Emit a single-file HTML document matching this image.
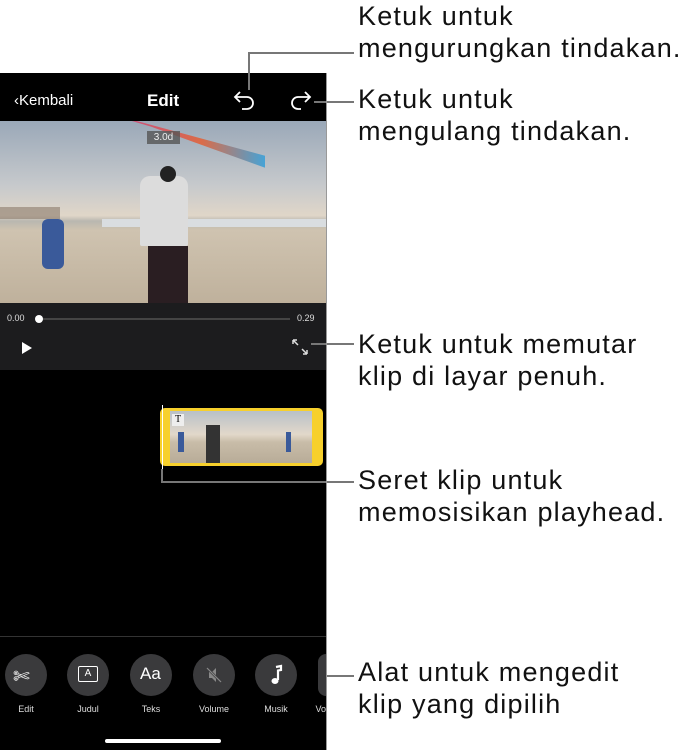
<!DOCTYPE html>
<html><head><meta charset="utf-8"><style>
body{margin:0;width:689px;height:750px;background:#fff;position:relative;overflow:hidden;font-family:"Liberation Sans",sans-serif}
.ab{position:absolute}
.t{position:absolute;left:358px;font-size:27px;letter-spacing:1.2px;line-height:32px;color:#111;white-space:nowrap}
.ln{position:absolute;background:#777}
.circ{position:absolute;width:42px;height:42px;border-radius:50%;background:#3a3a3c;top:654px}
.lab{position:absolute;top:704px;font-size:9px;color:#ddd;width:60px;text-align:center}
</style></head><body>
<div class="ab" style="left:0;top:73px;width:326px;height:677px;background:#000"></div>
<div class="ab" style="left:14px;top:92px;color:#fff;font-size:15px">&#8249;Kembali</div>
<div class="ab" style="left:147px;top:91px;color:#fff;font-size:17px;font-weight:bold">Edit</div>
<svg class="ab" style="left:232px;top:88px" width="28" height="26" viewBox="0 0 28 26"><path d="M8 4 L3 9 L8 14 M3 9 H15 A6 6 0 0 1 15 21 H10" fill="none" stroke="#fff" stroke-width="1.8"/></svg>
<svg class="ab" style="left:285px;top:88px" width="28" height="26" viewBox="0 0 28 26"><path d="M20 4 L25 9 L20 14 M25 9 H13 A6 6 0 0 0 13 21 H16" fill="none" stroke="#fff" stroke-width="1.8"/></svg>
<!-- video -->
<div class="ab" style="left:0;top:121px;width:326px;height:182px;background:linear-gradient(180deg,#9aa8b8 0%,#c6c9cc 35%,#e0d6c8 52%,#b9b7b0 55%,#cfc3b0 60%,#bfb19c 100%);overflow:hidden">
<div class="ab" style="left:75px;top:0;width:190px;height:30px;background:linear-gradient(90deg,#4a8fd0,#d44a6c,#e0643c,#3aa0d8);transform:skewY(10deg);opacity:.9;clip-path:polygon(0 0,100% 60%,100% 100%,40% 30%)"></div>
<div class="ab" style="left:102px;top:98px;width:224px;height:8px;background:#d9dde0"></div>
<div class="ab" style="left:140px;top:55px;width:48px;height:70px;background:#dcdcdc;border-radius:10px 10px 2px 2px"></div>
<div class="ab" style="left:160px;top:45px;width:16px;height:16px;background:#222;border-radius:50%"></div>
<div class="ab" style="left:148px;top:125px;width:40px;height:57px;background:#2a1e22"></div>
<div class="ab" style="left:42px;top:98px;width:22px;height:50px;background:#3a5a9a;border-radius:6px"></div>
<div class="ab" style="left:0;top:86px;width:60px;height:12px;background:#8a7a6a;opacity:.6"></div>
<div class="ab" style="left:147px;top:10px;width:33px;height:13px;background:#555c;color:#eee;font-size:10px;text-align:center;line-height:13px">3.0d</div>
</div>
<div class="ab" style="left:0;top:303px;width:326px;height:67px;background:#1c1c1e"></div>
<div class="ab" style="left:7px;top:313px;color:#ddd;font-size:9px">0.00</div>
<div class="ab" style="left:297px;top:313px;color:#ddd;font-size:9px">0.29</div>
<div class="ab" style="left:40px;top:318px;width:250px;height:2px;background:#444"></div>
<div class="ab" style="left:35px;top:315px;width:8px;height:8px;border-radius:50%;background:#fff"></div>
<svg class="ab" style="left:21px;top:341px" width="12" height="14"><path d="M1 1 L11 7 L1 13Z" fill="#fff"/></svg>
<svg class="ab" style="left:291px;top:338px" width="18" height="18" viewBox="0 0 18 18"><path d="M2 2 L7 7 M2 2 V6 M2 2 H6 M16 16 L11 11 M16 16 V12 M16 16 H12" stroke="#ddd" stroke-width="1.5" fill="none"/></svg>
<!-- clip -->
<div class="ab" style="left:160px;top:408px;width:163px;height:58px;background:#f7d02c;border-radius:5px"></div>
<div class="ab" style="left:170px;top:411px;width:142px;height:52px;background:linear-gradient(180deg,#b8c0c8 0%,#e2d8ca 45%,#c8bca8 60%,#b8ac98 100%)"></div>
<div class="ab" style="left:206px;top:425px;width:14px;height:38px;background:#333"></div>
<div class="ab" style="left:178px;top:432px;width:6px;height:20px;background:#3a5a9a"></div>
<div class="ab" style="left:286px;top:432px;width:5px;height:20px;background:#3a5a9a"></div>
<div class="ab" style="left:172px;top:414px;width:12px;height:12px;background:#eee;font-size:10px;font-family:'Liberation Serif',serif;text-align:center;line-height:12px">T</div>
<div class="ab" style="left:162px;top:405px;width:1px;height:64px;background:#fff"></div>
<div class="ab" style="left:0;top:636px;width:326px;height:1px;background:#333"></div>
<div class="circ" style="left:5px"></div><div class="circ" style="left:67px"></div><div class="circ" style="left:130px"></div><div class="circ" style="left:193px"></div><div class="circ" style="left:255px"></div><div class="circ" style="left:318px;width:8px;border-radius:21px 0 0 21px"></div>
<div class="ab" style="left:13px;top:664px;color:#fff;font-size:20px">&#9988;</div>
<div class="ab" style="left:78px;top:666px;width:18px;height:14px;border:1.5px solid #fff;border-radius:2px;color:#fff;font-size:10px;text-align:center;line-height:14px">A</div>
<div class="ab" style="left:140px;top:664px;color:#fff;font-size:17px">Aa</div>
<svg class="ab" style="left:205px;top:666px" width="18" height="18" viewBox="0 0 18 18"><path d="M4 6 H7 L11 2 V16 L7 12 H4Z" fill="#888"/><path d="M2 2 L16 16" stroke="#3a3a3c" stroke-width="2.5"/><path d="M2 2 L16 16" stroke="#888" stroke-width="1.2"/></svg>
<svg class="ab" style="left:268px;top:664px" width="16" height="22" viewBox="0 0 16 22"><path d="M8 3 L13 2 V6 L10 6.5 V16" stroke="#fff" stroke-width="2.2" fill="none"/><ellipse cx="7" cy="17" rx="3.5" ry="3" fill="#fff"/></svg>
<div class="lab" style="left:-4px">Edit</div><div class="lab" style="left:58px">Judul</div><div class="lab" style="left:121px">Teks</div><div class="lab" style="left:184px">Volume</div><div class="lab" style="left:246px">Musik</div><div class="lab" style="left:290px;text-align:right;width:36px;overflow:hidden">Vo</div>
<div class="ab" style="left:105px;top:739px;width:116px;height:4px;border-radius:2px;background:#fff"></div>
<!-- callouts -->
<div class="ln" style="left:248px;top:52px;width:2px;height:38px"></div>
<div class="ln" style="left:248px;top:52px;width:106px;height:2px"></div>
<div class="ln" style="left:314px;top:101px;width:40px;height:2px"></div>
<div class="ln" style="left:311px;top:343px;width:43px;height:2px"></div>
<div class="ln" style="left:161px;top:469px;width:2px;height:14px"></div>
<div class="ln" style="left:161px;top:481px;width:193px;height:2px"></div>
<div class="ln" style="left:326px;top:675px;width:28px;height:2px"></div>
<div class="ln" style="left:326px;top:73px;width:1px;height:677px;background:#999"></div>
<div class="t" style="top:0px">Ketuk untuk<br>mengurungkan tindakan.</div>
<div class="t" style="top:83px">Ketuk untuk<br>mengulang tindakan.</div>
<div class="t" style="top:328px">Ketuk untuk memutar<br>klip di layar penuh.</div>
<div class="t" style="top:464px">Seret klip untuk<br>memosisikan playhead.</div>
<div class="t" style="top:656px">Alat untuk mengedit<br>klip yang dipilih</div>
</body></html>
